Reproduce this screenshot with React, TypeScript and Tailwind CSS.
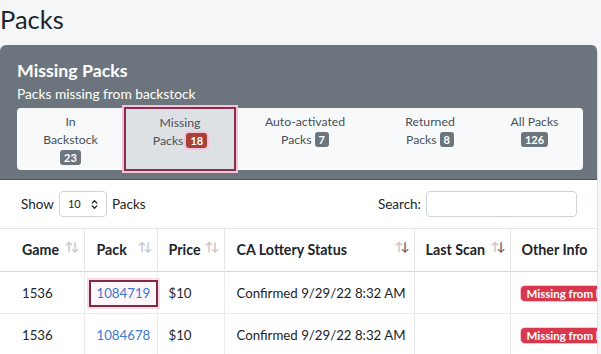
import { ChevronsUpDown } from "lucide-react";

const tabs = [
  { lines: ["In", "Backstock"], count: "23", width: "w-[107px]", badgeBelow: true },
  { lines: ["Missing", "Packs"], count: "18", width: "w-[112px]", active: true },
  { lines: ["Auto-activated", "Packs"], count: "7", width: "w-[138px]" },
  { lines: ["Returned", "Packs"], count: "8", width: "w-[112px]" },
  { lines: ["All Packs"], count: "126", width: "w-[97px]", badgeBelow: true },
];

const rows = [
  { game: "1536", pack: "1084719", price: "$10", status: "Confirmed 9/29/22 8:32 AM", marked: true },
  { game: "1536", pack: "1084678", price: "$10", status: "Confirmed 9/29/22 8:32 AM" },
];

function SortArrows({ dark }: { dark?: boolean }) {
  return (
    <span className="absolute right-[7px] top-[12px] text-[12px] leading-none tracking-[-3px] text-[#c3c7cb]">
      ↑<span className={dark ? "text-[#5f656b]" : ""}>↓</span>
    </span>
  );
}

function Badge({ value, active }: { value: string; active?: boolean }) {
  return (
    <span
      className={
        active
          ? "ml-[3px] inline-block rounded-[3px] bg-[#a5433b] px-[4px] text-[11px] font-bold leading-[15px] text-white shadow-[0_0_0_2px_#f6c4d8]"
          : "ml-[3px] inline-block rounded-[3px] bg-[#6c757d] px-[4px] text-[11px] font-bold leading-[15px] text-white"
      }
    >
      {value}
    </span>
  );
}

export default function App() {
  return (
    <div className="h-[354px] w-[601px] overflow-hidden bg-[#f5f6f8] font-['Lato',sans-serif] text-[#212529]">
      <h1 className="h-[45px] pt-[2px] text-[25.5px] leading-[34px]">Packs</h1>

      <div className="mr-[3px] overflow-hidden rounded-t-[6px] border-r border-[#dfe2e6]">
        <div className="bg-[#6c757d] px-[17px] pb-[9px] pt-[13px] text-white">
          <h2 className="text-[17.75px] font-bold leading-[24px]">Missing Packs</h2>
          <p className="mt-[1px] text-[13.75px] leading-[22px]">Packs missing from backstock</p>
          <div className="mt-[3px] flex h-[62px] w-[566px] rounded-[4px] bg-[#f8f9fa] text-[12.25px] leading-[18px] text-[#495057]">
            {tabs.map((tab) => (
              <div
                key={tab.count}
                className={
                  tab.active
                    ? `${tab.width} -my-[1px] flex flex-col items-center border-2 border-[#852e4d] bg-[#dde0e5] pt-[5px] text-center shadow-[0_0_0_2px_#f4c3d6]`
                    : `${tab.width} flex flex-col items-center pt-[5px] text-center`
                }
              >
                {tab.lines.map((line, i) => (
                  <span key={line}>
                    {line}
                    {!tab.badgeBelow && i === tab.lines.length - 1 && (
                      <Badge value={tab.count} active={tab.active} />
                    )}
                  </span>
                ))}
                {tab.badgeBelow && (
                  <span className="-ml-[3px]">
                    <Badge value={tab.count} />
                  </span>
                )}
              </div>
            ))}
          </div>
        </div>

        <div className="border-t border-[#4e555b] bg-white">
          <div className="flex h-[48px] items-center justify-between pl-[21px] pr-[20px] text-[13.5px]">
            <div className="flex items-center gap-[5px]">
              <span>Show</span>
              <span className="flex h-[26px] w-[48px] items-center justify-between rounded-[4px] border border-[#ced4da] pl-[8px] pr-[6px] text-[11px]">
                10
                <ChevronsUpDown size={11} strokeWidth={3} />
              </span>
              <span>Packs</span>
            </div>
            <div className="flex items-center gap-[5px]">
              <span>Search:</span>
              <span className="h-[26px] w-[151px] rounded-[4px] border border-[#ced4da]" />
            </div>
          </div>

          <table className="w-[620px] table-fixed border-collapse whitespace-nowrap text-[13.25px]">
            <colgroup>
              <col className="w-[84px]" />
              <col className="w-[73px]" />
              <col className="w-[67px]" />
              <col className="w-[190px]" />
              <col className="w-[96px]" />
              <col className="w-[110px]" />
            </colgroup>
            <thead>
              <tr className="h-[43px] border-y border-t-[#e3e6e9] border-b-[#d5d9dd] text-left text-[14.25px] font-bold">
                <th className="relative pl-[22px]">
                  Game
                  <SortArrows />
                </th>
                <th className="relative border-l border-[#e3e6e9] pl-[12px]">
                  Pack
                  <SortArrows />
                </th>
                <th className="relative border-l border-[#e3e6e9] pl-[11px]">
                  Price
                  <SortArrows />
                </th>
                <th className="relative border-l border-[#e3e6e9] pl-[12px]">
                  CA Lottery Status
                  <SortArrows dark />
                </th>
                <th className="relative border-l border-[#e3e6e9] pl-[11px]">
                  Last Scan
                  <SortArrows dark />
                </th>
                <th className="border-l border-[#e3e6e9] pl-[11px]">Other Info</th>
              </tr>
            </thead>
            <tbody>
              {rows.map((row) => (
                <tr key={row.pack} className="h-[42px] border-t border-[#e9ecef]">
                  <td className="pl-[22px] pt-[2px]">{row.game}</td>
                  <td className="border-l border-[#e9ecef] pl-[4px] pt-[2px]">
                    <span
                      className={
                        row.marked
                          ? "inline-block border-2 border-[#7e2b43] bg-[#fff6fa] px-[6px] py-[2px] text-[#3b78d0] shadow-[0_0_0_2px_#fbdcea]"
                          : "inline-block px-[8px] py-[4px] text-[#3b78d0]"
                      }
                    >
                      {row.pack}
                    </span>
                  </td>
                  <td className="border-l border-[#e9ecef] pl-[11px] pt-[2px]">{row.price}</td>
                  <td className="border-l border-[#e9ecef] pl-[12px] pt-[2px]">{row.status}</td>
                  <td className="border-l border-[#e9ecef]" />
                  <td className="border-l border-[#e9ecef] pl-[10px] pt-[2px]">
                    <span className="inline-block rounded-[4px] bg-[#d8374d] px-[6px] text-[11.5px] font-bold leading-[15px] text-white shadow-[0_0_0_1px_#f7c2d2]">
                      Missing from backstock
                    </span>
                  </td>
                </tr>
              ))}
            </tbody>
          </table>
        </div>
      </div>
    </div>
  );
}
